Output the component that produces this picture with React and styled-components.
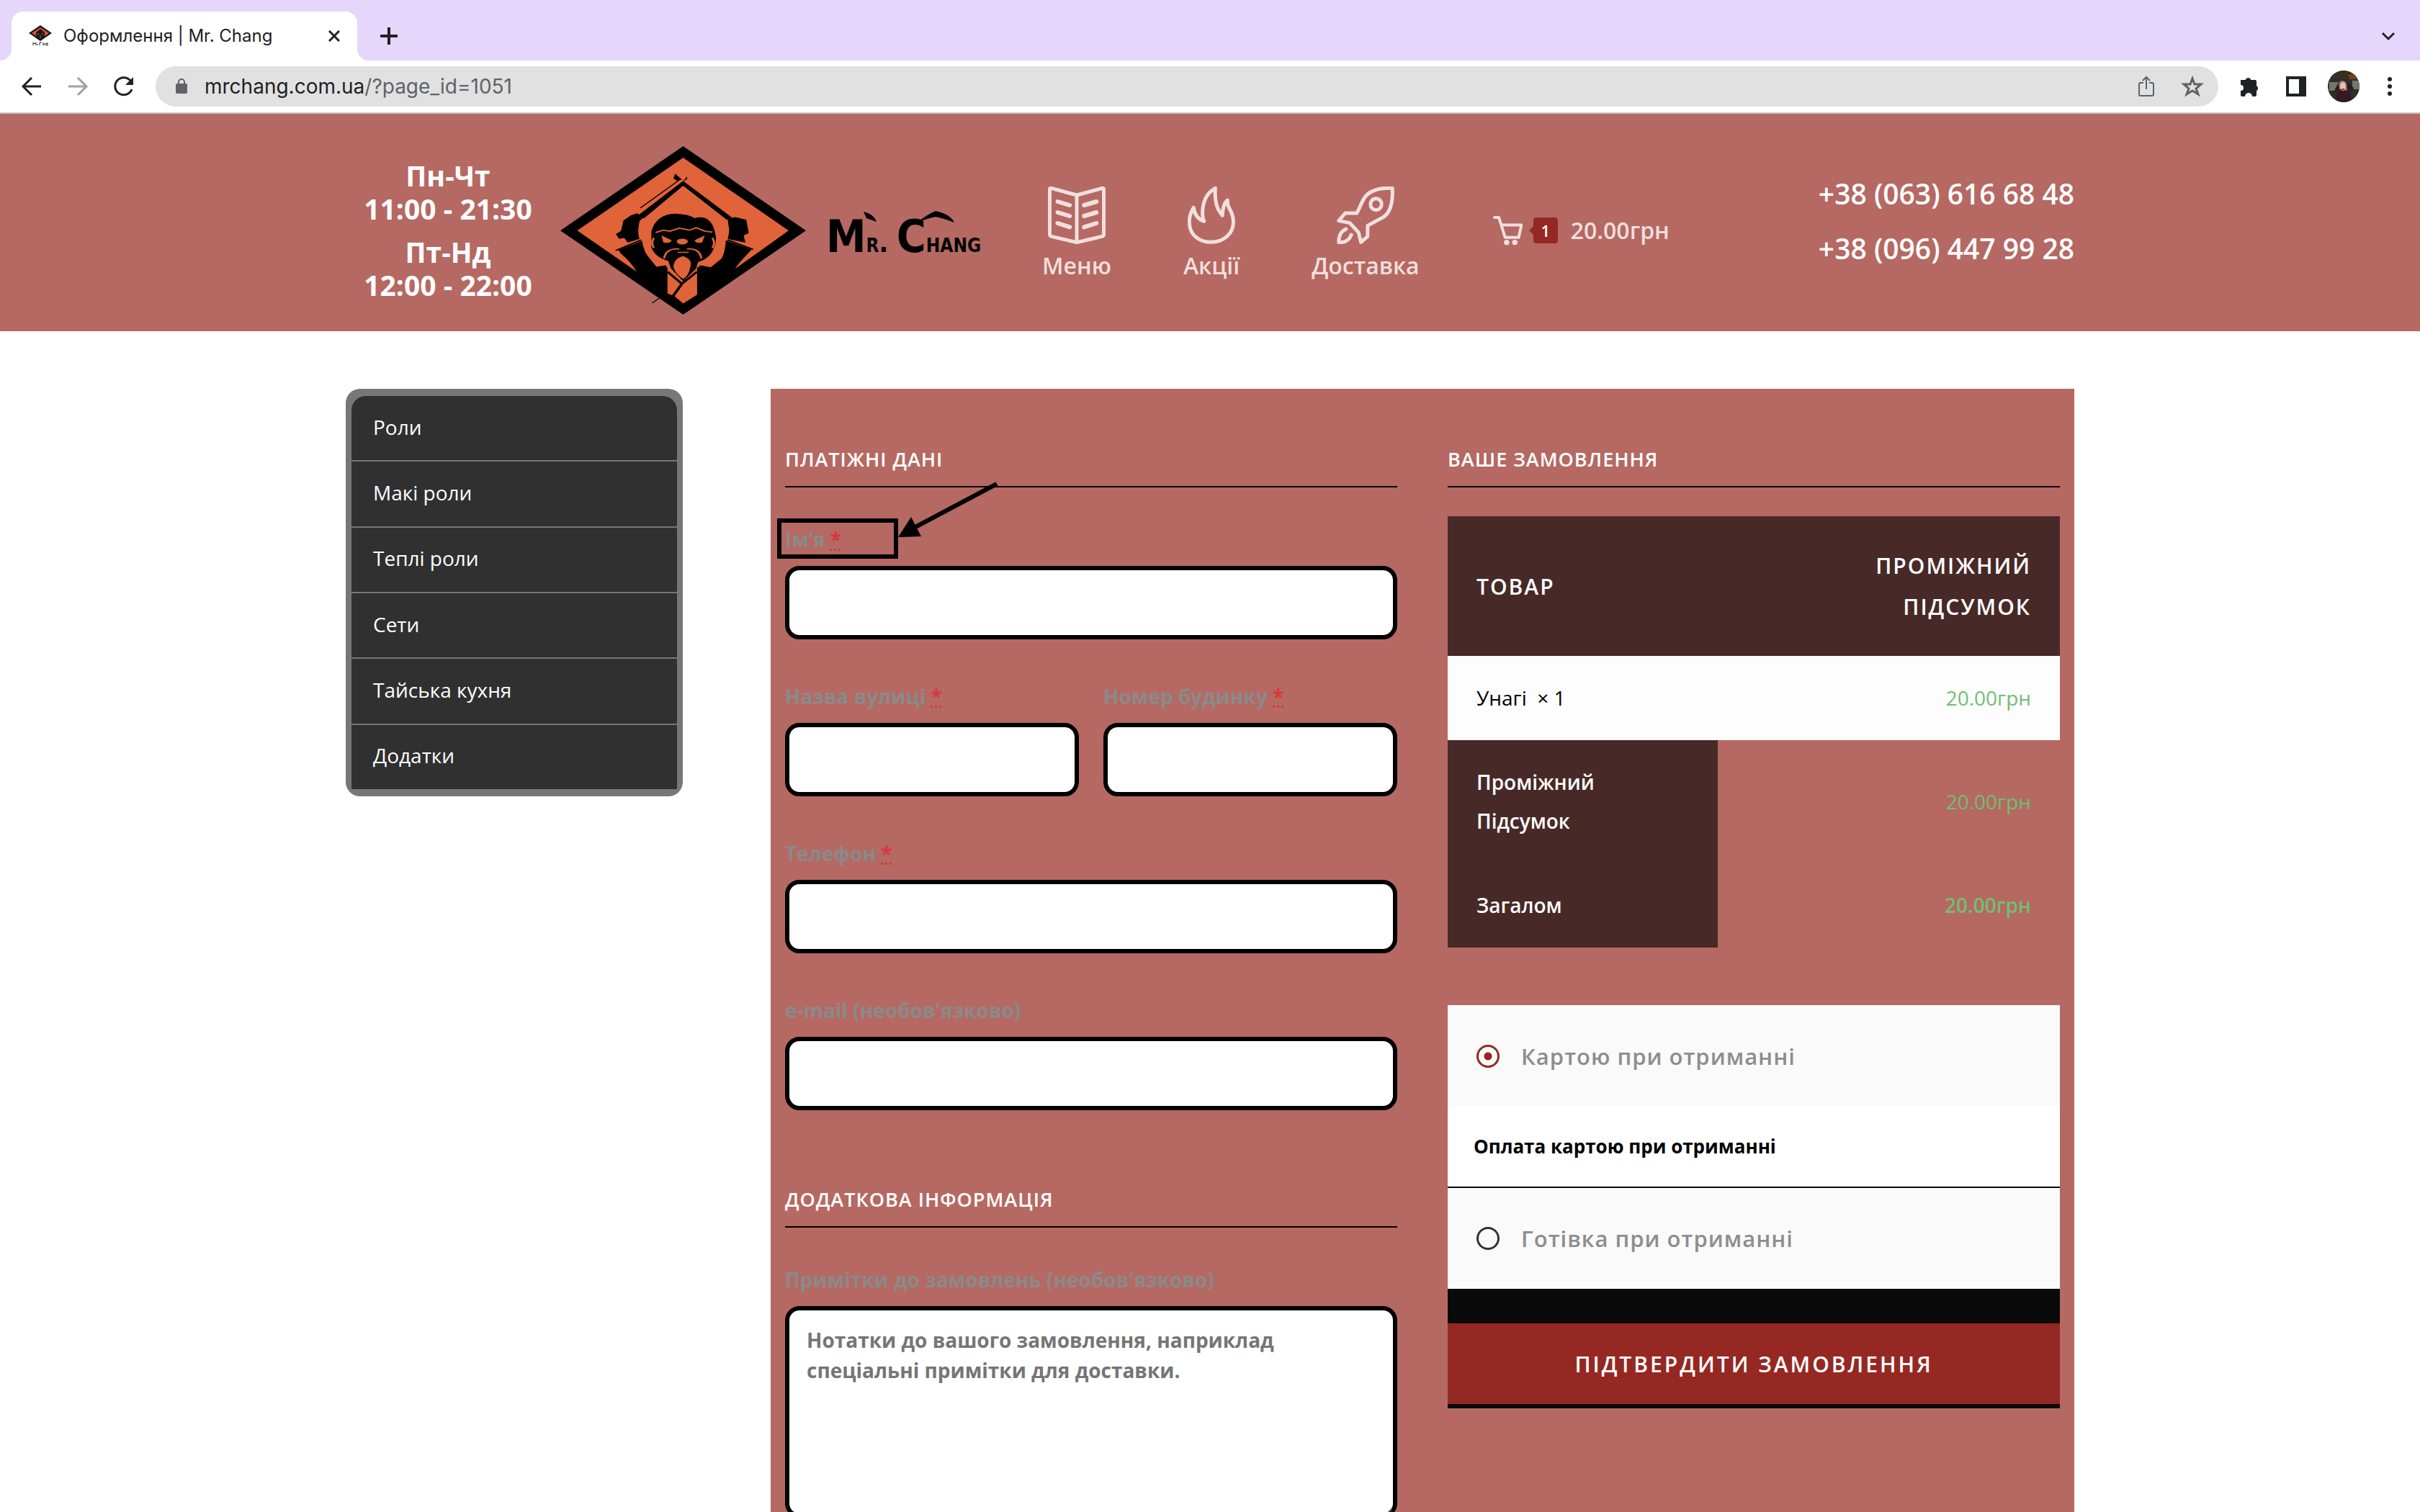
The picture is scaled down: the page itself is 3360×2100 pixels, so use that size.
import React from "react";
import styled, { createGlobalStyle } from "styled-components";

const color = {
  brand: "#b56962",
  brandPale: "#f1dfde",
  red: "#952822",
  dark: "#472928",
  ink: "#0a0a0a",
  green: "#70be74",
  label: "#8a8a8a",
  chrome: "#202124",
  chromeSoft: "#5f6368",
};

const body = `"Open Sans", "Noto Sans", sans-serif`;
const ui = `Inter, Roboto, sans-serif`;

const Global = createGlobalStyle`
  *, *::before, *::after { box-sizing: border-box; }
  body { margin: 0; background: #fff; font-family: ${body}; }
  button { border: 0; padding: 0; background: none; font: inherit; color: inherit; cursor: pointer; }
  a { color: inherit; text-decoration: none; }
  svg { display: block; flex: none; }
`;

const Shell = styled.div`
  height: 100vh;
  overflow: hidden;
  display: flex;
  flex-direction: column;
`;

/* ---------- browser frame ---------- */

const TabStrip = styled.div`
  height: 84px;
  flex: none;
  display: flex;
  align-items: flex-end;
  padding: 0 32px 0 16px;
  background: #e5d7fb;
  color: ${color.chrome};
`;

const Tab = styled.div`
  position: relative;
  width: 480px;
  height: 68px;
  display: flex;
  align-items: center;
  padding: 0 24px;
  border-radius: 16px 16px 0 0;
  background: #fff;
  font: 400 24px/32px ${ui};

  &::before, &::after {
    content: "";
    position: absolute;
    bottom: 0;
    width: 16px;
    height: 16px;
  }
  &::before { right: 100%; background: radial-gradient(circle at 0 0, transparent 16px, #fff 16px); }
  &::after { left: 100%; background: radial-gradient(circle at 100% 0, transparent 16px, #fff 16px); }
`;

const TabTitle = styled.span`
  flex: 1;
  margin-left: 16px;
  white-space: nowrap;
`;

const StripButton = styled.button`
  height: 68px;
  display: flex;
  align-items: center;
  margin-left: ${(p) => (p.$end ? "auto" : "32px")};
  padding: 0;
`;

const Toolbar = styled.div`
  height: 74px;
  flex: none;
  display: flex;
  align-items: center;
  gap: 36px;
  padding: 0 28px;
  border-bottom: 2px solid #c8cac8;
  background: #fff;
  color: ${color.chrome};
`;

const NavButtons = styled.div`
  display: flex;
  gap: 32px;
  margin-right: -8px;
`;

const Omnibox = styled.div`
  flex: 1;
  height: 56px;
  display: flex;
  align-items: center;
  padding: 0 20px 0 26px;
  border-radius: 28px;
  background: #e1e1e1;
  color: ${color.chromeSoft};
  font: 400 28px/36px ${ui};
`;

const Url = styled.span`
  flex: 1;
  margin-left: 22px;
  b { font-weight: 400; color: ${color.chrome}; }
`;

const OmniActions = styled.div`
  display: flex;
  gap: 32px;
`;

const ToolActions = styled.div`
  display: flex;
  align-items: center;
  gap: 28px;
  margin-left: -8px;
`;

/* ---------- site header ---------- */

const Header = styled.header`
  flex: none;
  padding: 45px 24px 23px;
  background: ${color.brand};
`;

const HeaderInner = styled.div`
  max-width: 2400px;
  margin: 0 auto;
  display: flex;
  align-items: center;
`;

const Hours = styled.div`
  width: 284px;
  display: flex;
  flex-direction: column;
  gap: 14px;
  color: #fff;
  text-align: center;
  font-size: 39px;
  font-weight: 700;
  line-height: 46px;
  white-space: nowrap;
  p { margin: 0; }
`;

const LogoLink = styled.a`
  display: flex;
  align-items: center;
  gap: 28px;
  margin-left: 14px;
`;

const Wordmark = styled.span`
  position: relative;
  width: 212px;
  padding-top: 26px;
  color: #000;
  font: 700 37px/64px "DejaVu Sans Condensed", "DejaVu Sans", sans-serif;
  font-variant: small-caps;
  white-space: nowrap;
  b { font-size: 62px; }
  svg { position: absolute; left: 50px; top: 20px; }
`;

const SiteNav = styled.nav`
  display: flex;
  gap: 100px;
  margin-left: 88px;
  padding-top: 10px;
`;

const NavLink = styled.a`
  display: flex;
  flex-direction: column;
  align-items: center;
  gap: 8px;
  color: ${color.brandPale};
  font-size: 32px;
  font-weight: 600;
  line-height: 44px;
`;

const CartLink = styled.a`
  display: flex;
  align-items: center;
  margin-left: 102px;
  color: ${color.brandPale};
  font-size: 32px;
  font-weight: 600;
  line-height: 44px;
`;

const CartCount = styled.span`
  position: relative;
  width: 34px;
  height: 36px;
  margin: 0 18px 0 15px;
  border-radius: 4px;
  background: ${color.red};
  color: #fff;
  font-size: 22px;
  line-height: 36px;
  text-align: center;
  &::before {
    content: "";
    position: absolute;
    left: -6px;
    top: 12px;
    border: 6px solid transparent;
    border-left-width: 0;
    border-right-color: ${color.red};
  }
`;

const Phones = styled.div`
  display: flex;
  flex-direction: column;
  margin-left: auto;
  padding-bottom: 26px;
  color: #fff;
  font-size: 39px;
  font-weight: 600;
  line-height: 76px;
  white-space: nowrap;
`;

/* ---------- page ---------- */

const Page = styled.main`
  width: 100%;
  max-width: 2400px;
  margin: 80px auto 0;
  display: flex;
  align-items: flex-start;
  gap: 122px;
`;

const Menu = styled.ul`
  flex: none;
  width: 468px;
  height: 566px;
  margin: 0;
  padding: 10px 8px;
  display: grid;
  grid-auto-rows: 1fr;
  gap: 2px;
  list-style: none;
  border-radius: 20px;
  background: #777;
`;

const MenuItem = styled.li`
  display: flex;
  align-items: center;
  padding: 0 30px 4px;
  background: #303030;
  color: #fff;
  font-size: 28px;
  line-height: 40px;
  &:first-child { border-radius: 20px 20px 0 0; }
`;

const Checkout = styled.form`
  flex: 1;
  min-width: 0;
  display: grid;
  grid-template-columns: 1fr 1fr;
  gap: 70px;
  padding: 78px 20px;
  background: ${color.brand};
`;

const Column = styled.section`
  min-width: 0;
`;

const Heading = styled.h3`
  margin: ${(p) => (p.$later ? "104px" : "0")} 0 ${(p) => (p.$tight ? "40px" : "53px")};
  padding-bottom: 17px;
  border-bottom: 2px solid #000;
  color: #fff;
  font-size: 27px;
  font-weight: 600;
  line-height: 40px;
  letter-spacing: 1px;
  text-transform: uppercase;
`;

const Fields = styled.div`
  display: grid;
  grid-template-columns: 1fr 1fr;
  gap: 60px 34px;
`;

const Field = styled.div`
  position: relative;
  grid-column: ${(p) => (p.$half ? "auto" : "1 / -1")};
  display: flex;
  flex-direction: column;
  gap: 18px;
  label {
    color: ${color.label};
    font-size: 28px;
    font-weight: 700;
    line-height: 38px;
  }
`;

const Required = styled.abbr`
  color: #d9363e;
  text-decoration: underline dotted;
`;

const boxStyle = `
  width: 100%;
  border: 6px solid #000;
  border-radius: 20px;
  background: #fff;
  color: #333;
  font: 700 28px/42px ${body};
  outline: none;
`;

const TextBox = styled.input`
  ${boxStyle}
  height: 102px;
  padding: 0 24px;
`;

const Notes = styled.textarea`
  ${boxStyle}
  height: 294px;
  padding: 20px 24px;
  &::placeholder { color: #757575; }
`;

const Callout = styled.svg`
  position: absolute;
  left: -11px;
  top: -65px;
  pointer-events: none;
`;

const Order = styled.table`
  width: 100%;
  table-layout: fixed;
  border-collapse: collapse;
  font-size: 28px;
  line-height: 54px;

  th, td { padding: 31px 40px 32px; font-weight: 400; text-align: left; }
  th:last-child, td:last-child { text-align: right; }
  thead th {
    padding: 40px;
    background: ${color.dark};
    color: #fff;
    font-size: 30px;
    font-weight: 600;
    line-height: 57px;
    letter-spacing: 2px;
    text-transform: uppercase;
  }
  thead th:first-child { width: 375px; }
  tbody td { background: #fdfdfd; color: #000; }
  tbody td:last-child, tfoot td { color: ${color.green}; }
  tfoot th { background: ${color.dark}; color: #fff; font-weight: 600; }
`;

const TotalCell = styled.td`
  && { font-weight: 600; }
`;

const Payment = styled.div`
  margin-top: 80px;
  background: ${color.ink};
`;

const Method = styled.label`
  height: ${(p) => (p.$short ? "140px" : "141px")};
  display: flex;
  align-items: center;
  gap: 30px;
  padding: 0 40px;
  background: #fafafa;
  color: #8d8d8d;
  font-size: 31px;
  font-weight: 600;
  line-height: 44px;
  letter-spacing: 1px;
`;

const Radio = styled.input`
  appearance: none;
  flex: none;
  width: 32px;
  height: 32px;
  margin: 0;
  border: 3px solid #333;
  border-radius: 50%;
  &:checked {
    border-color: ${color.red};
    background: radial-gradient(circle, ${color.red} 5px, transparent 6px);
  }
`;

const MethodNote = styled.p`
  height: 113px;
  margin: 0;
  padding: 35px 36px;
  border-bottom: 2px solid ${color.ink};
  background: #fff;
  color: #000;
  font-size: 26px;
  font-weight: 700;
  line-height: 40px;
`;

const Submit = styled.button`
  && {
    display: block;
    width: 100%;
    height: 118px;
    margin-top: 48px;
    border-bottom: 6px solid ${color.ink};
    background: ${color.red};
    color: #fff;
    font-size: 30px;
    font-weight: 600;
    letter-spacing: 3px;
    text-transform: uppercase;
  }
`;

/* ---------- drawings ---------- */

const Logo = ({ width, height }) => (
  <svg width={width} height={height} viewBox="525 40 580 698" preserveAspectRatio="none" aria-hidden="true">
    <path d="M815 40 1105 390 815 738 525 390Z" fill="#000" />
    <path d="M815 88 1064 390 938 548Q944 528 972 478L976 468 916 430Q914 480 906 505L880 542 856 534 848 545V655L815 692 795 662 778 650V545L774 534 752 540 736 505Q722 480 718 432L662 470 668 485Q692 520 705 560L565 390Z" fill="#e1633a" />
    <path d="M815 184 930 335 918 345 815 204 722 340 706 330Z" fill="#000" />
    <path d="M796 154 812 178 802 184 792 174Z" fill="#000" />
    <path d="M806 180 714 296M822 168Q826 176 816 182M742 690 760 668" fill="none" stroke="#000" strokeWidth="3" />
    <path d="M706 318 722 334 712 350Q706 400 712 424L684 440 676 420 664 424 656 404 668 392 674 348 692 326Z" fill="#000" />
    <path d="M920 340 938 334 964 345 970 400 958 410 962 440 920 424Q926 390 922 368Z" fill="#000" />
    <path d="M740 392Q752 322 796 320 828 322 842 338 880 320 890 396 896 430 888 460 880 505 850 520L846 546 815 600 786 546 780 516Q748 500 740 460Z" fill="#000" />
    <path d="M656 472 716 428M980 468 920 428" stroke="#000" strokeWidth="5" />
    <path d="M815 496Q838 510 832 540 828 580 815 590 796 570 792 540 794 504 815 496Z" fill="#e1633a" />
    <path d="M770 505Q774 462 806 466M858 505Q854 462 824 466M802 480H828M750 398 768 388 784 392 806 380 830 388 846 378 866 392 884 396M746 420Q738 440 746 462M884 420Q892 440 884 462" fill="none" stroke="#e1633a" strokeWidth="5" />
    <ellipse cx="813" cy="435" rx="13" ry="12" fill="#e1633a" />
    <path d="M764 410 788 430Q784 446 768 438ZM866 410 842 430Q846 446 860 438Z" fill="#e1633a" />
    <path d="M778 560 812 610 790 664M848 560 812 610" fill="none" stroke="#000" strokeWidth="7" />
  </svg>
);

const Favicon = () => (
  <svg width="32" height="30" viewBox="0 0 32 30" aria-hidden="true">
    <path d="M16 0 32 11 16 22 0 11Z" fill="#1a1a1a" />
    <path d="M16 3 28 11 16 19 4 11Z" fill="#d9582f" />
    <path d="M10 15V10L16 5 22 10V15L16 20Z" fill="#1a1a1a" />
    <path d="M13 11V14M16 14V18M19 11V14" stroke="#d9582f" strokeWidth="1" />
    <path d="M6 28V24L8 26 10 24V28M12 28V26M15 28V24H18M20 24V28M22 25V28M24 28V25H26V29" fill="none" stroke="#222" strokeWidth="1" />
  </svg>
);

const thin = { fill: "none", stroke: "currentColor", strokeWidth: 5, strokeLinejoin: "round", strokeLinecap: "round", vectorEffect: "non-scaling-stroke" };

const BookIcon = () => (
  <svg width="80" height="80" viewBox="135 117 196 240" preserveAspectRatio="none" aria-hidden="true">
    <path {...thin} d="M146 124 233 153 320 124Q325 123 325 129V316Q325 322 319 325L233 350 147 325Q141 322 141 316V129Q141 123 146 124ZM233 153V350" />
    <path {...thin} strokeWidth="6" d="M168 180 209 195M168 225 209 240M168 270 209 286M258 195 300 180M258 240 300 225M258 286 300 270" />
  </svg>
);

const FlameIcon = () => (
  <svg width="66" height="80" viewBox="612 117 160 240" preserveAspectRatio="none" aria-hidden="true">
    <path {...thin} d="M705 124C675 145 661 185 662 235Q663 250 667 262C645 252 635 235 632 205 622 225 616 250 618 275 622 325 655 349 691 349 730 349 765 318 766 265Q765 235 754 212 745 195 746 174 730 190 729 238C710 210 702 180 705 124Z" />
  </svg>
);

const RocketIcon = () => (
  <svg width="80" height="80" viewBox="1125 117 198 240" preserveAspectRatio="none" aria-hidden="true">
    <path {...thin} d="M1316 124Q1260 120 1230 150C1215 165 1210 190 1194 228H1154L1132 260 1170 269 1200 309 1208 349 1231 325V280L1286 244Q1320 215 1316 124ZM1157 294Q1131 308 1132 350 1165 352 1175 318" />
    <ellipse {...thin} cx="1260" cy="191" rx="19" ry="24" />
  </svg>
);

const CartIcon = () => (
  <svg width="41" height="41" viewBox="64 248 76 124" preserveAspectRatio="none" aria-hidden="true">
    <path {...thin} strokeWidth="4" d="M68 254H79L95 338H130L137 286H86" />
    <ellipse cx="99" cy="359" rx="7" ry="11" fill="currentColor" />
    <ellipse cx="120" cy="359" rx="7" ry="11" fill="currentColor" />
  </svg>
);

const Glyph = ({ size = 32, w = 3, children, tone }) => (
  <svg width={size} height={size} viewBox={`0 0 ${size} ${size}`} fill="none" stroke={tone || "currentColor"} strokeWidth={w} aria-hidden="true">
    {children}
  </svg>
);

const Avatar = () => (
  <svg width="44" height="44" viewBox="0 0 44 44" aria-hidden="true">
    <defs>
      <clipPath id="face"><circle cx="22" cy="22" r="22" /></clipPath>
    </defs>
    <g clipPath="url(#face)">
      <path d="M0 0H44V44H0Z" fill="#2b302b" />
      <path d="M0 0H44V10H0Z" fill="#3a2d1d" />
      <path d="M2 16H14V28H2ZM34 14H44V26H34Z" fill="#77766a" />
      <path d="M28 6 38 4 42 12 30 12Z" fill="#7a3d1c" />
      <path d="M10 44 13 28 8 30 14 18 20 15H26L36 24 34 30 30 27 33 44Z" fill="#341824" />
      <path d="M15 17Q20 11 26 17L27 28 16 26Z" fill="#99765f" />
      <ellipse cx="21" cy="22" rx="4" ry="6" fill="#e4c0b3" />
      <path d="M19 26H23" stroke="#a63038" strokeWidth="2" />
    </g>
  </svg>
);

const menuItems = ["Роли", "Макі роли", "Теплі роли", "Сети", "Тайська кухня", "Додатки"];

const Input = ({ id, label, required, half, type = "text", children }) => (
  <Field $half={half}>
    <label htmlFor={id}>
      {label} {required && <Required>*</Required>}
    </label>
    <TextBox id={id} type={type} />
    {children}
  </Field>
);

export default function App() {
  return (
    <Shell>
      <Global />
      <TabStrip>
        <Tab>
          <Favicon />
          <TabTitle>Оформлення | Mr. Chang</TabTitle>
          <button type="button" aria-label="Close tab">
            <Glyph size={16}><path d="M1 1 15 15M15 1 1 15" /></Glyph>
          </button>
        </Tab>
        <StripButton type="button" aria-label="New tab">
          <Glyph size={24} w={4}><path d="M12 1V23M1 12H23" strokeLinecap="round" /></Glyph>
        </StripButton>
        <StripButton type="button" aria-label="Search tabs" $end>
          <Glyph size={24}><path d="M4 8 12 16 20 8" /></Glyph>
        </StripButton>
      </TabStrip>

      <Toolbar>
        <NavButtons>
          <button type="button" aria-label="Back"><Glyph><path d="M29 16H5M16 4 4 16 16 28" /></Glyph></button>
          <button type="button" aria-label="Forward"><Glyph tone="#a0a1a3"><path d="M3 16H27M16 4 28 16 16 28" /></Glyph></button>
          <button type="button" aria-label="Reload">
            <Glyph>
              <path d="M25 8A12 12 0 1 0 27 20" />
              <path d="M29 3V14H18Z" fill="currentColor" stroke="none" />
            </Glyph>
          </button>
        </NavButtons>
        <Omnibox>
          <svg width="20" height="24" viewBox="0 0 20 24" aria-hidden="true">
            <rect x="2" y="8" width="16" height="14" rx="2" fill="currentColor" />
            <path d="M6 9V6A4 4 0 0 1 14 6V9" fill="none" stroke="currentColor" strokeWidth="2" />
          </svg>
          <Url><b>mrchang.com.ua</b>/?page_id=1051</Url>
          <OmniActions>
            <button type="button" aria-label="Share">
              <Glyph w={2}><path d="M12 11H8Q6 11 6 13V27Q6 29 8 29H24Q26 29 26 27V13Q26 11 24 11H20M16 20V4M11 8 16 3 21 8" /></Glyph>
            </button>
            <button type="button" aria-label="Bookmark">
              <Glyph><path d="M16 5 19 13 28 13 21 19 24 27 16 22 8 27 11 19 4 13 13 13Z" /></Glyph>
            </button>
          </OmniActions>
        </Omnibox>
        <ToolActions>
          <button type="button" aria-label="Extensions">
            <Glyph size={36} w={0}><path fill="currentColor" d="M3 9H10V8A4 4 0 0 1 17 8V9H23Q25 9 25 11V17A4 4 0 0 1 25 24V30Q25 32 23 32H19A5 5 0 0 0 9 32H5Q3 32 3 30V24A4 4 0 0 0 3 16Z" /></Glyph>
          </button>
          <button type="button" aria-label="Side panel">
            <Glyph w={0}><path fill="currentColor" fillRule="evenodd" d="M2 2H30V30H2ZM6 6V26H20V6Z" /></Glyph>
          </button>
          <button type="button" aria-label="Profile"><Avatar /></button>
          <button type="button" aria-label="More">
            <Glyph size={28} w={0}>
              <g fill="currentColor"><circle cx="14" cy="4" r="3" /><circle cx="14" cy="14" r="3" /><circle cx="14" cy="24" r="3" /></g>
            </Glyph>
          </button>
        </ToolActions>
      </Toolbar>

      <Header>
        <HeaderInner>
          <Hours>
            <p>Пн-Чт<br />11:00 - 21:30</p>
            <p>Пт-Нд<br />12:00 - 22:00</p>
          </Hours>
          <LogoLink href="#home">
            <Logo width={341} height={234} />
            <Wordmark>
              <b>M</b>r. <b>C</b>hang
              <svg width="140" height="20" viewBox="0 0 140 20" aria-hidden="true">
                <path d="M2 3Q16 6 20 17L6 12ZM76 18Q92 6 102 2 122 6 128 18 112 12 102 10 92 12 76 18Z" fill="#000" />
              </svg>
            </Wordmark>
          </LogoLink>
          <SiteNav>
            <NavLink href="#menu"><BookIcon />Меню</NavLink>
            <NavLink href="#promo"><FlameIcon />Акції</NavLink>
            <NavLink href="#delivery"><RocketIcon />Доставка</NavLink>
          </SiteNav>
          <CartLink href="#cart">
            <CartIcon />
            <CartCount>1</CartCount>
            20.00грн
          </CartLink>
          <Phones>
            <a href="tel:+380636166848">+38 (063) 616 68 48</a>
            <a href="tel:+380964479928">+38 (096) 447 99 28</a>
          </Phones>
        </HeaderInner>
      </Header>

      <Page>
        <Menu>
          {menuItems.map((item) => (
            <MenuItem key={item}><a href="#category">{item}</a></MenuItem>
          ))}
        </Menu>

        <Checkout>
          <Column>
            <Heading>Платіжні дані</Heading>
            <Fields>
              <Input id="name" label="Ім’я" required>
                <Callout width="311" height="111" viewBox="0 0 311 111" aria-hidden="true">
                  <rect x="3" y="58" width="162" height="50" fill="none" stroke="#000" strokeWidth="6" />
                  <path d="M190 68 305 7" stroke="#000" strokeWidth="6" />
                  <path d="M168 81 186 53 200 80Z" fill="#000" />
                </Callout>
              </Input>
              <Input id="street" label="Назва вулиці" required half />
              <Input id="house" label="Номер будинку" required half />
              <Input id="phone" label="Телефон" type="tel" required />
              <Input id="email" label="e-mail (необов'язково)" type="email" />
            </Fields>
            <Heading $later>Додаткова інформація</Heading>
            <Field>
              <label htmlFor="notes">Примітки до замовлень (необов'язково)</label>
              <Notes id="notes" placeholder="Нотатки до вашого замовлення, наприклад спеціальні примітки для доставки." />
            </Field>
          </Column>

          <Column>
            <Heading $tight>Ваше замовлення</Heading>
            <Order>
              <thead>
                <tr><th>Товар</th><th>Проміжний<br />підсумок</th></tr>
              </thead>
              <tbody>
                <tr><td>Унагі&nbsp; × 1</td><td>20.00грн</td></tr>
              </tbody>
              <tfoot>
                <tr><th>Проміжний<br />Підсумок</th><td>20.00грн</td></tr>
                <tr><th>Загалом</th><TotalCell>20.00грн</TotalCell></tr>
              </tfoot>
            </Order>
            <Payment>
              <Method htmlFor="pay-card">
                <Radio type="radio" id="pay-card" name="payment" defaultChecked />
                Картою при отриманні
              </Method>
              <MethodNote>Оплата картою при отриманні</MethodNote>
              <Method htmlFor="pay-cash" $short>
                <Radio type="radio" id="pay-cash" name="payment" />
                Готівка при отриманні
              </Method>
              <Submit type="button">Підтвердити замовлення</Submit>
            </Payment>
          </Column>
        </Checkout>
      </Page>
    </Shell>
  );
}
